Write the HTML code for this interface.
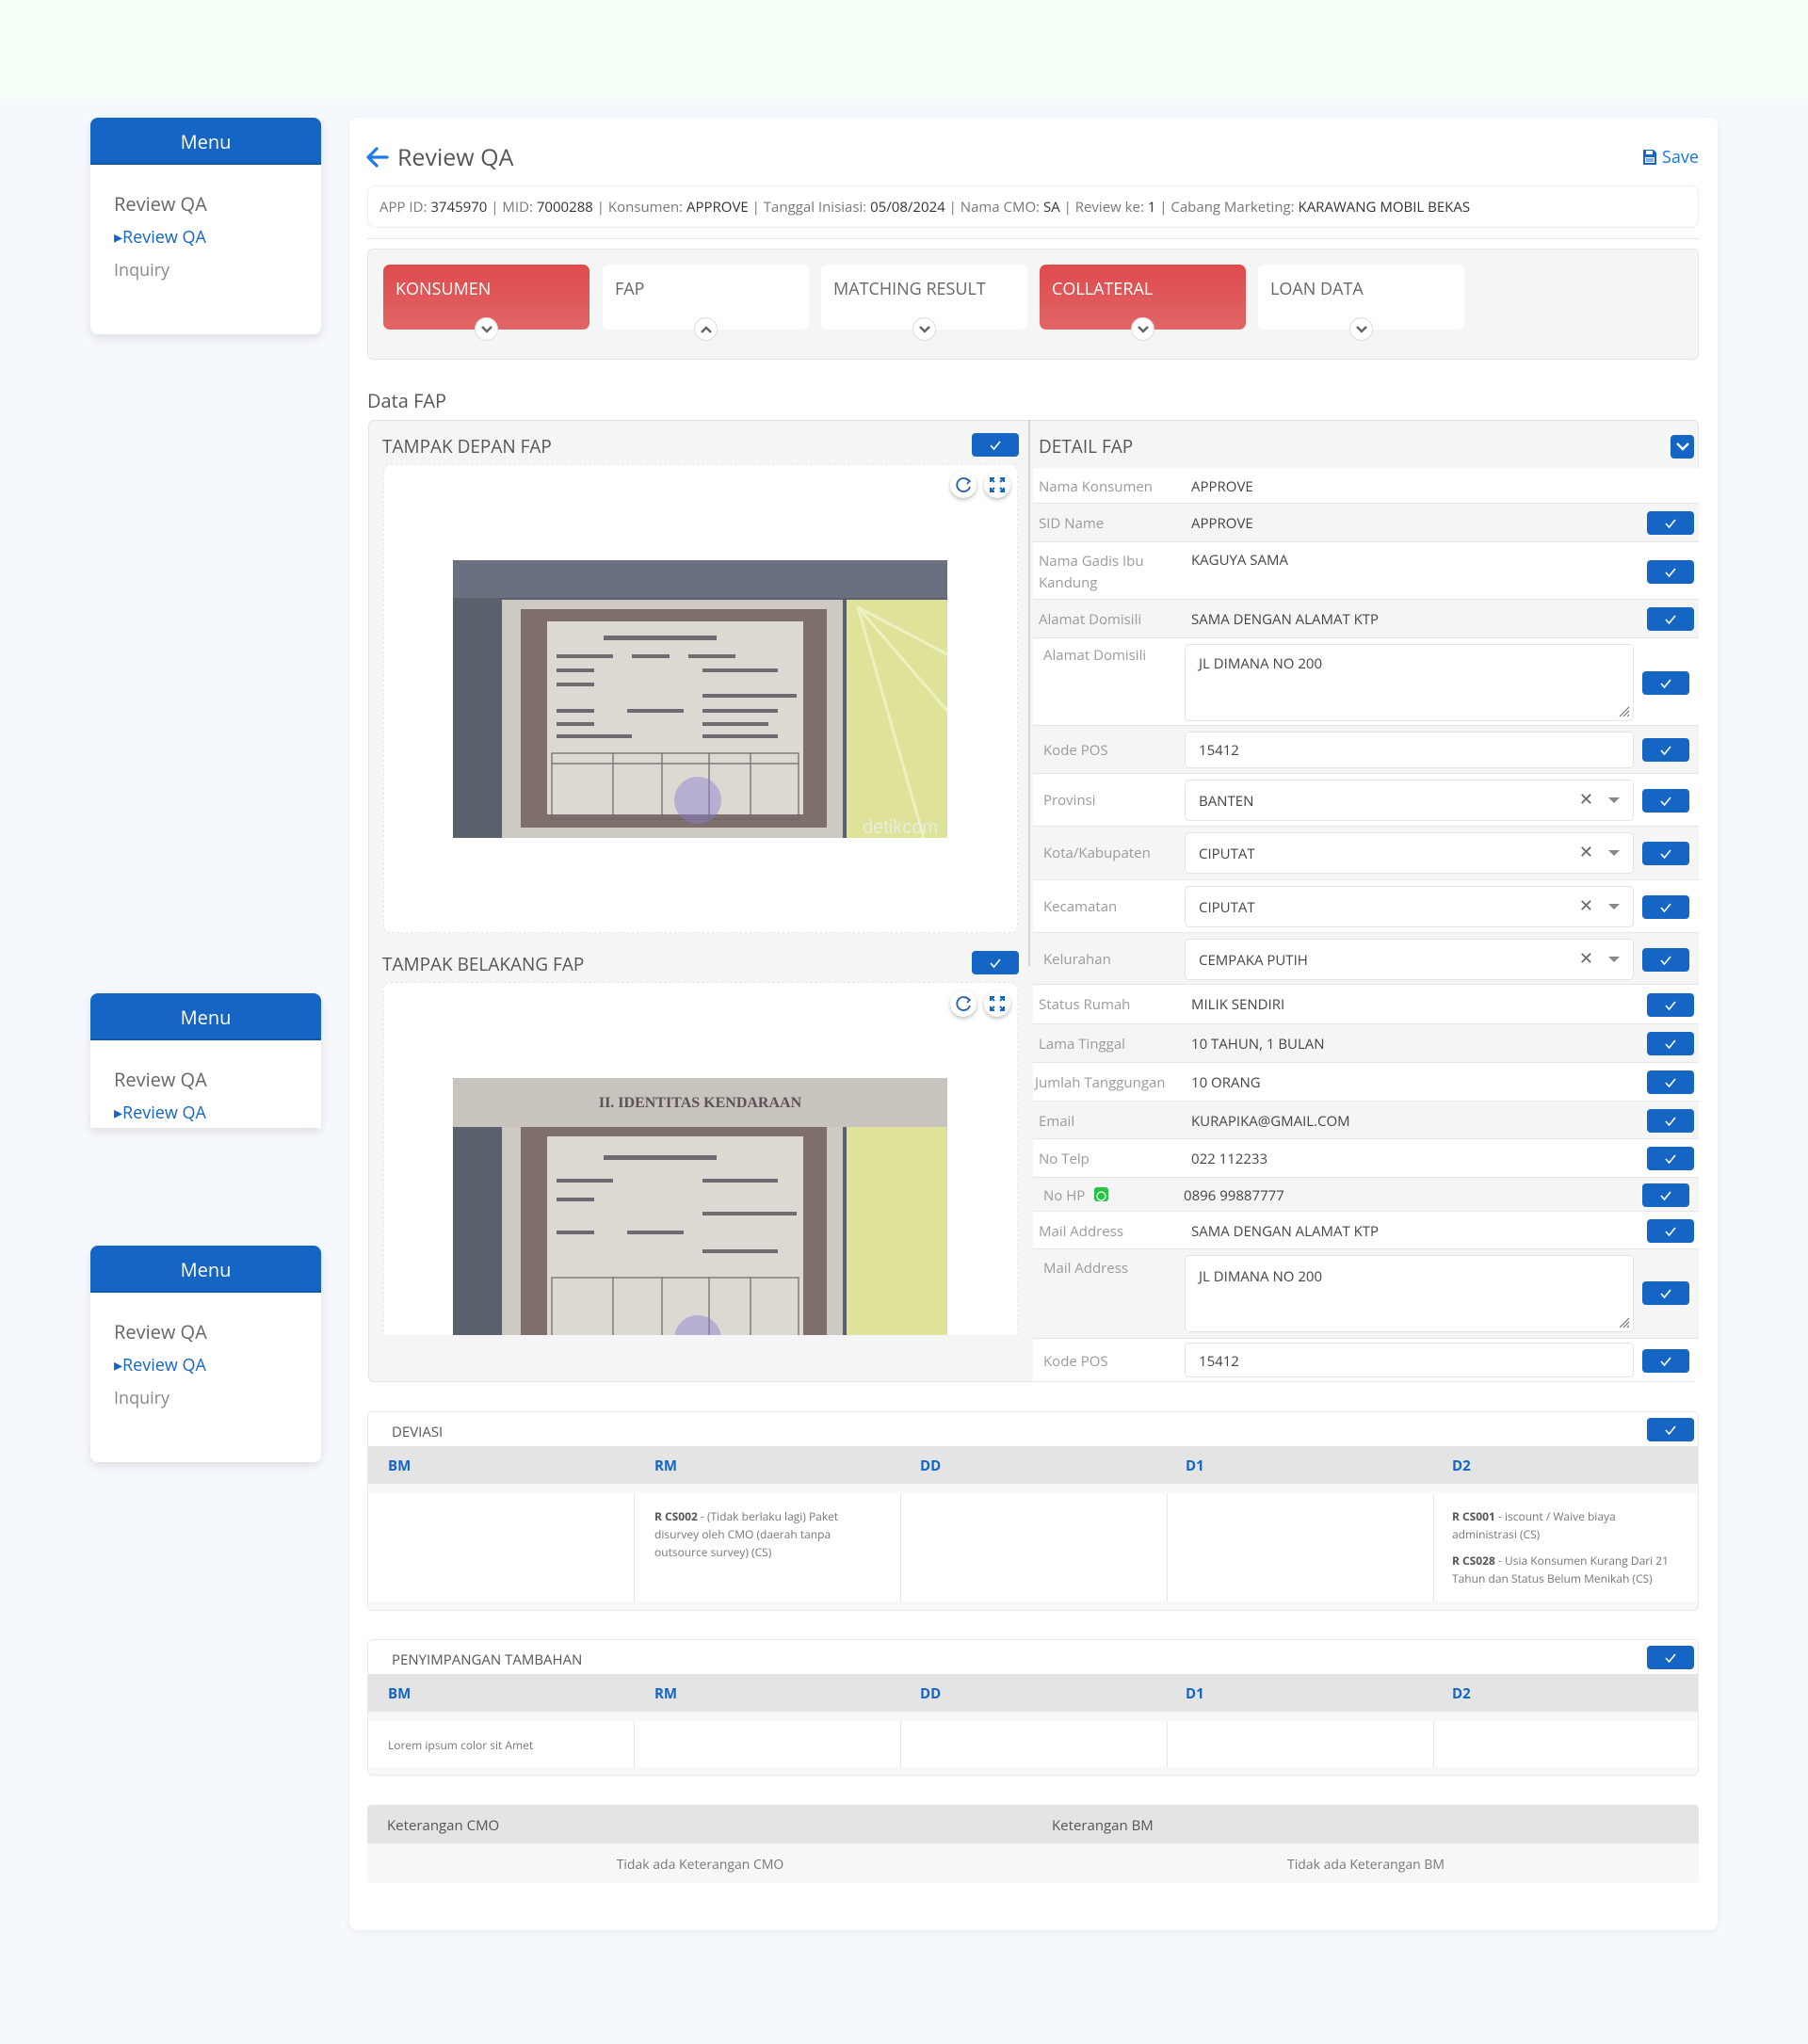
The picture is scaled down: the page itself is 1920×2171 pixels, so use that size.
<!DOCTYPE html>
<html><head><meta charset="utf-8">
<style>
*{box-sizing:border-box;margin:0;padding:0}
body{width:1920px;height:2171px;background:#f5f8fd;font-family:"Open Sans","Liberation Sans",sans-serif;position:relative;overflow:hidden;color:#555}
.a{position:absolute}
.top{left:0;top:0;width:1920px;height:105px;background:#f5fff5}
.side{left:96px;width:245px;background:#fff;border-radius:8px;box-shadow:0 4px 10px rgba(0,0,0,.10);overflow:hidden}
.side .h{height:50px;background:#1565c4;color:#fff;font-size:20px;text-align:center;line-height:52px;border-bottom:2px solid #0f58ad}
.side .i{position:absolute;left:25px;font-size:20px;color:#666}
.side .s{position:absolute;left:25px;font-size:18px;color:#1565c4}
.main{left:371px;top:125px;width:1453px;height:1925px;background:#fff;border-radius:8px;box-shadow:0 2px 8px rgba(0,0,0,.05)}
.btn{position:absolute;width:50px;height:25px;background:#1565c4;border-radius:4px;display:flex;align-items:center;justify-content:center}
.tab{position:absolute;top:281px;width:219px;height:69px;border-radius:7px;background:#fff;font-size:18px;color:#666;padding:14px 0 0 13px}
.tab.r{background:linear-gradient(#df4b4d,#e06566);color:#fff}
.chev{position:absolute;left:97px;top:56px;width:25px;height:25px;border-radius:50%;background:#fff;border:1px solid #ddd;display:flex;align-items:center;justify-content:center}
.row{position:absolute;left:1097px;width:707px;border-bottom:1px solid #e6e6e6}
.g{background:#f5f5f5}.w{background:#fff}
.lb{position:absolute;left:6px;font-size:15px;color:#9a9a9a}
.lb2{position:absolute;left:11px;font-size:15px;color:#9a9a9a}
.vl{position:absolute;left:168px;font-size:15px;color:#444}
.inp{position:absolute;left:161px;width:477px;background:#fff;border:1px solid #e3e3e3;border-radius:5px;font-size:15px;color:#444;padding-left:14px}
.x{position:absolute;right:42px;font-size:18px;color:#666}
.car{position:absolute;right:14px;width:0;height:0;border-left:6px solid transparent;border-right:6px solid transparent;border-top:6px solid #888}
.card{position:absolute;left:390px;width:1414px;background:#fff;border:1px solid #e8e8e8;border-radius:6px;overflow:hidden}
.th{position:absolute;left:0;width:100%;height:40px;background:#e4e4e4}
.th span{position:absolute;top:11px;font-size:15px;font-weight:bold;color:#1565c4}
.cell{position:absolute;font-size:12px;color:#777;line-height:19px}
.cell b{color:#555;font-weight:bold}
.vd{position:absolute;width:1px;background:#e6e6e6}
.ic{position:absolute;width:28px;height:28px;border-radius:50%;background:#fff;box-shadow:0 2px 4px rgba(0,0,0,.25);display:flex;align-items:center;justify-content:center}
</style></head><body>
<div class="a top"></div>

<div class="a side" style="top:125px;height:230px"><div class="h">Menu</div>
<div class="i" style="top:78px">Review QA</div>
<div class="s" style="top:115px">&#9656;Review QA</div>
<div class="i" style="top:150px;font-size:18px;color:#888">Inquiry</div></div>
<div class="a side" style="top:1055px;height:143px;border-radius:8px 8px 0 0"><div class="h">Menu</div>
<div class="i" style="top:78px">Review QA</div>
<div class="s" style="top:115px">&#9656;Review QA</div></div>
<div class="a side" style="top:1323px;height:230px"><div class="h">Menu</div>
<div class="i" style="top:78px">Review QA</div>
<div class="s" style="top:115px">&#9656;Review QA</div>
<div class="i" style="top:150px;font-size:18px;color:#888">Inquiry</div></div>

<div class="a main"></div>
<svg class="a" style="left:389px;top:156px" width="24" height="22" viewBox="0 0 24 22"><path d="M11 2 L2 11 L11 20 M2 11 H22" stroke="#1e7ae6" stroke-width="3.2" fill="none" stroke-linecap="round" stroke-linejoin="round"/></svg>
<div class="a" style="left:422px;top:150px;font-size:25px;color:#555">Review QA</div>
<svg class="a" style="left:1744px;top:158px" width="16" height="18" viewBox="0 0 16 18"><path d="M1 1 H12 L15 4 V17 H1 Z" fill="#1565c4"/><rect x="4" y="2" width="7" height="4" fill="#fff"/><rect x="3" y="9" width="10" height="6" fill="#fff"/><path d="M4 11 H12 M4 13 H12" stroke="#1565c4"/></svg>
<div class="a" style="left:1765px;top:155px;font-size:18px;color:#1a73e8">Save</div>
<div class="a" style="left:390px;top:197px;width:1414px;height:45px;border:1px solid #eee;border-radius:8px;font-size:15px;color:#777;padding:12px 0 0 12px;white-space:nowrap">APP ID: <span style="color:#333">3745970</span> | MID: <span style="color:#333">7000288</span> | Konsumen: <span style="color:#333">APPROVE</span> | Tanggal Inisiasi: <span style="color:#333">05/08/2024</span> | Nama CMO: <span style="color:#333">SA</span> | Review ke: <span style="color:#333">1</span> | Cabang Marketing: <span style="color:#333">KARAWANG MOBIL BEKAS</span></div>
<div class="a" style="left:390px;top:253px;width:1414px;height:1px;background:#e5e5e5"></div>
<div class="a" style="left:390px;top:264px;width:1414px;height:118px;background:#f5f5f5;border:1px solid #e6e6e6;border-radius:6px"></div>
<div class="tab r" style="left:407px">KONSUMEN<div class="chev"><svg width="12" height="8"><path d="M1 1 L6 6 L11 1" stroke="#666" stroke-width="2.5" fill="none"/></svg></div></div>
<div class="tab" style="left:640px">FAP<div class="chev"><svg width="12" height="8"><path d="M1 7 L6 2 L11 7" stroke="#666" stroke-width="2.5" fill="none"/></svg></div></div>
<div class="tab" style="left:872px">MATCHING RESULT<div class="chev"><svg width="12" height="8"><path d="M1 1 L6 6 L11 1" stroke="#666" stroke-width="2.5" fill="none"/></svg></div></div>
<div class="tab r" style="left:1104px">COLLATERAL<div class="chev"><svg width="12" height="8"><path d="M1 1 L6 6 L11 1" stroke="#666" stroke-width="2.5" fill="none"/></svg></div></div>
<div class="tab" style="left:1336px">LOAN DATA<div class="chev"><svg width="12" height="8"><path d="M1 1 L6 6 L11 1" stroke="#666" stroke-width="2.5" fill="none"/></svg></div></div>

<div class="a" style="left:390px;top:412px;font-size:20px;color:#555">Data FAP</div>

<div class="a" style="left:391px;top:446px;width:1413px;height:1022px;background:#f5f5f5;border:1px solid #e4e4e4;border-radius:6px"></div>
<div class="a" style="left:1092px;top:446px;width:2px;height:580px;background:#d5d5d5"></div>
<div class="a" style="left:406px;top:461px;font-size:19px;color:#555">TAMPAK DEPAN FAP</div>
<div class="btn" style="left:1032px;top:460px"><svg width="14" height="12"><path d="M2 6 L5.5 10 L12 2" stroke="#fff" stroke-width="1.6" fill="none"/></svg></div>
<div class="a" style="left:407px;top:493px;width:674px;height:498px;background:#fff;border:1px dashed #e6e6e6;border-radius:8px"></div>
<svg class="a" style="left:481px;top:595px" width="525" height="295" viewBox="0 0 525 295">
<rect width="525" height="295" fill="#5b606d"/><rect width="525" height="40" fill="#6b7080"/>
<rect x="52" y="42" width="362" height="253" fill="#cfc9c3"/>
<rect x="72" y="52" width="325" height="232" fill="#7e6f6c"/>
<rect x="100" y="65" width="272" height="205" fill="#ddd8d1"/>
<rect x="418" y="42" width="107" height="253" fill="#dfe39a"/>
<path d="M430 50 L525 100 M430 50 L525 160 M430 50 L500 295" stroke="#eef0c0" stroke-width="3"/>
<g stroke="#6c6868" stroke-width="1.2" fill="none"><rect x="105" y="205" width="262" height="70"/><path d="M170 205 V275 M222 205 V275 M272 205 V275 M316 205 V275 M105 216 H367"/></g>
<g fill="#6d6a70"><rect x="160" y="80" width="120" height="5"/><rect x="110" y="100" width="60" height="4"/><rect x="190" y="100" width="40" height="4"/><rect x="250" y="100" width="50" height="4"/><rect x="110" y="115" width="40" height="4"/><rect x="265" y="115" width="80" height="4"/><rect x="110" y="130" width="40" height="4"/><rect x="265" y="142" width="100" height="4"/><rect x="110" y="158" width="40" height="4"/><rect x="185" y="158" width="60" height="4"/><rect x="265" y="158" width="80" height="4"/><rect x="110" y="172" width="40" height="4"/><rect x="265" y="172" width="70" height="4"/><rect x="110" y="185" width="80" height="4"/><rect x="265" y="185" width="80" height="4"/></g>
<circle cx="260" cy="255" r="25" fill="#8a7fd0" opacity=".45"/>
<text x="435" y="290" font-family="Liberation Sans" font-size="20" fill="#eee" opacity=".8">detikcom</text>
</svg>
<div class="ic" style="left:1009px;top:501px"><svg width="20" height="20"><path d="M16 6 A7 7 0 1 0 17 12" stroke="#2a5fb0" stroke-width="1.8" fill="none"/><path d="M13 3 L17 6 L14 9" stroke="#2a5fb0" stroke-width="1.6" fill="none"/></svg></div>
<div class="ic" style="left:1045px;top:501px"><svg width="16" height="16"><path d="M1 5 V1 H5 M1 1 L5 5 M11 1 H15 V5 M15 1 L11 5 M15 11 V15 H11 M15 15 L11 11 M5 15 H1 V11 M1 15 L5 11" stroke="#1565c4" stroke-width="2" fill="none"/></svg></div>

<div class="a" style="left:406px;top:1011px;font-size:19px;color:#555">TAMPAK BELAKANG FAP</div>
<div class="btn" style="left:1032px;top:1010px"><svg width="14" height="12"><path d="M2 6 L5.5 10 L12 2" stroke="#fff" stroke-width="1.6" fill="none"/></svg></div>
<div class="a" style="left:407px;top:1043px;width:674px;height:375px;background:#fff;border:1px dashed #e6e6e6;border-bottom:none;border-radius:8px 8px 0 0;overflow:hidden"></div>
<div class="a" style="left:481px;top:1145px;width:525px;height:273px;overflow:hidden">
<div class="a" style="left:0;top:0;width:525px;height:60px;background:#c9c3bd"><div class="a" style="left:0;top:18px;width:525px;text-align:center;font-family:'Liberation Serif',serif;font-size:16px;font-weight:bold;color:#5a5256">II. IDENTITAS KENDARAAN</div></div>
<svg class="a" style="left:0;top:52px" width="525" height="295" viewBox="0 0 525 295">
<rect width="525" height="295" fill="#5b606d"/>
<rect x="52" y="0" width="362" height="295" fill="#cfc9c3"/>
<rect x="72" y="0" width="325" height="284" fill="#7e6f6c"/>
<rect x="100" y="10" width="272" height="260" fill="#ddd8d1"/>
<rect x="418" y="0" width="107" height="295" fill="#dfe39a"/>
<g fill="#6d6a70"><rect x="160" y="30" width="120" height="5"/><rect x="110" y="55" width="60" height="4"/><rect x="265" y="55" width="80" height="4"/><rect x="110" y="75" width="40" height="4"/><rect x="265" y="90" width="100" height="4"/><rect x="110" y="110" width="40" height="4"/><rect x="185" y="110" width="60" height="4"/><rect x="265" y="130" width="80" height="4"/></g>
<g stroke="#6c6868" stroke-width="1.2" fill="none"><rect x="105" y="160" width="262" height="110"/><path d="M170 160 V270 M222 160 V270 M272 160 V270 M316 160 V270"/></g>
<circle cx="260" cy="225" r="25" fill="#8a7fd0" opacity=".45"/>
</svg></div>
<div class="ic" style="left:1009px;top:1052px"><svg width="20" height="20"><path d="M16 6 A7 7 0 1 0 17 12" stroke="#2a5fb0" stroke-width="1.8" fill="none"/><path d="M13 3 L17 6 L14 9" stroke="#2a5fb0" stroke-width="1.6" fill="none"/></svg></div>
<div class="ic" style="left:1045px;top:1052px"><svg width="16" height="16"><path d="M1 5 V1 H5 M1 1 L5 5 M11 1 H15 V5 M15 1 L11 5 M15 11 V15 H11 M15 15 L11 11 M5 15 H1 V11 M1 15 L5 11" stroke="#1565c4" stroke-width="2" fill="none"/></svg></div>

<div class="a" style="left:1103px;top:461px;font-size:19px;color:#555">DETAIL FAP</div>
<div class="a" style="left:1774px;top:462px;width:25px;height:25px;background:#1565c4;border-radius:4px;display:flex;align-items:center;justify-content:center"><svg width="14" height="9"><path d="M1 1 L7 7 L13 1" stroke="#fff" stroke-width="2.4" fill="none"/></svg></div>

<div class="row w" style="top:497px;height:38px"><span class="lb" style="top:10px">Nama Konsumen</span><span class="vl" style="top:10px">APPROVE</span></div>
<div class="row g" style="top:535px;height:41px"><span class="lb" style="top:11px">SID Name</span><span class="vl" style="top:11px">APPROVE</span><div class="btn" style="left:652px;top:8px"><svg width="14" height="12"><path d="M2 6 L5.5 10 L12 2" stroke="#fff" stroke-width="1.6" fill="none"/></svg></div></div>
<div class="row w" style="top:576px;height:61px"><span class="lb" style="top:9px;line-height:23px">Nama Gadis Ibu<br>Kandung</span><span class="vl" style="top:9px">KAGUYA SAMA</span><div class="btn" style="left:652px;top:19px"><svg width="14" height="12"><path d="M2 6 L5.5 10 L12 2" stroke="#fff" stroke-width="1.6" fill="none"/></svg></div></div>
<div class="row g" style="top:637px;height:41px"><span class="lb" style="top:11px">Alamat Domisili</span><span class="vl" style="top:11px">SAMA DENGAN ALAMAT KTP</span><div class="btn" style="left:652px;top:8px"><svg width="14" height="12"><path d="M2 6 L5.5 10 L12 2" stroke="#fff" stroke-width="1.6" fill="none"/></svg></div></div>
<div class="row w" style="top:678px;height:93px"><span class="lb2" style="top:8px">Alamat Domisili</span><div class="inp" style="top:6px;height:82px;padding-top:10px">JL DIMANA NO 200<svg class="a" style="right:3px;bottom:3px" width="14" height="14"><path d="M13 3 L3 13 M13 7 L7 13 M13 11 L11 13" stroke="#666"/></svg></div><div class="btn" style="left:647px;top:35px"><svg width="14" height="12"><path d="M2 6 L5.5 10 L12 2" stroke="#fff" stroke-width="1.6" fill="none"/></svg></div></div>
<div class="row g" style="top:771px;height:51px"><span class="lb2" style="top:16px">Kode POS</span><div class="inp" style="top:6px;height:39px;padding-top:9px">15412</div><div class="btn" style="left:647px;top:13px"><svg width="14" height="12"><path d="M2 6 L5.5 10 L12 2" stroke="#fff" stroke-width="1.6" fill="none"/></svg></div></div>
<div class="row w" style="top:822px;height:56px"><span class="lb2" style="top:18px">Provinsi</span><div class="inp" style="top:6px;height:44px;padding-top:12px">BANTEN<span class="x" style="top:8px">✕</span><span class="car" style="top:18px"></span></div><div class="btn" style="left:647px;top:16px"><svg width="14" height="12"><path d="M2 6 L5.5 10 L12 2" stroke="#fff" stroke-width="1.6" fill="none"/></svg></div></div>
<div class="row g" style="top:878px;height:57px"><span class="lb2" style="top:18px">Kota/Kabupaten</span><div class="inp" style="top:6px;height:44px;padding-top:12px">CIPUTAT<span class="x" style="top:8px">✕</span><span class="car" style="top:18px"></span></div><div class="btn" style="left:647px;top:16px"><svg width="14" height="12"><path d="M2 6 L5.5 10 L12 2" stroke="#fff" stroke-width="1.6" fill="none"/></svg></div></div>
<div class="row w" style="top:935px;height:56px"><span class="lb2" style="top:18px">Kecamatan</span><div class="inp" style="top:6px;height:44px;padding-top:12px">CIPUTAT<span class="x" style="top:8px">✕</span><span class="car" style="top:18px"></span></div><div class="btn" style="left:647px;top:16px"><svg width="14" height="12"><path d="M2 6 L5.5 10 L12 2" stroke="#fff" stroke-width="1.6" fill="none"/></svg></div></div>
<div class="row g" style="top:991px;height:55px"><span class="lb2" style="top:18px">Kelurahan</span><div class="inp" style="top:6px;height:44px;padding-top:12px">CEMPAKA PUTIH<span class="x" style="top:8px">✕</span><span class="car" style="top:18px"></span></div><div class="btn" style="left:647px;top:16px"><svg width="14" height="12"><path d="M2 6 L5.5 10 L12 2" stroke="#fff" stroke-width="1.6" fill="none"/></svg></div></div>
<div class="row w" style="top:1046px;height:42px"><span class="lb" style="top:11px">Status Rumah</span><span class="vl" style="top:11px">MILIK SENDIRI</span><div class="btn" style="left:652px;top:9px"><svg width="14" height="12"><path d="M2 6 L5.5 10 L12 2" stroke="#fff" stroke-width="1.6" fill="none"/></svg></div></div>
<div class="row g" style="top:1088px;height:41px"><span class="lb" style="top:11px">Lama Tinggal</span><span class="vl" style="top:11px">10 TAHUN, 1 BULAN</span><div class="btn" style="left:652px;top:8px"><svg width="14" height="12"><path d="M2 6 L5.5 10 L12 2" stroke="#fff" stroke-width="1.6" fill="none"/></svg></div></div>
<div class="row w" style="top:1129px;height:41px"><span class="lb" style="top:11px;left:2px">Jumlah Tanggungan</span><span class="vl" style="top:11px">10 ORANG</span><div class="btn" style="left:652px;top:8px"><svg width="14" height="12"><path d="M2 6 L5.5 10 L12 2" stroke="#fff" stroke-width="1.6" fill="none"/></svg></div></div>
<div class="row g" style="top:1170px;height:40px"><span class="lb" style="top:11px">Email</span><span class="vl" style="top:11px">KURAPIKA@GMAIL.COM</span><div class="btn" style="left:652px;top:8px"><svg width="14" height="12"><path d="M2 6 L5.5 10 L12 2" stroke="#fff" stroke-width="1.6" fill="none"/></svg></div></div>
<div class="row w" style="top:1210px;height:41px"><span class="lb" style="top:11px">No Telp</span><span class="vl" style="top:11px">022 112233</span><div class="btn" style="left:652px;top:8px"><svg width="14" height="12"><path d="M2 6 L5.5 10 L12 2" stroke="#fff" stroke-width="1.6" fill="none"/></svg></div></div>
<div class="row g" style="top:1251px;height:36px"><span class="lb2" style="top:9px">No HP</span><span class="a" style="left:65px;top:10px;width:15px;height:15px;background:#25c244;border-radius:3px"><svg width="15" height="15"><circle cx="7.5" cy="7.5" r="4.5" stroke="#fff" stroke-width="1.3" fill="none"/></svg></span><span class="vl" style="top:9px;left:160px">0896 99887777</span><div class="btn" style="left:647px;top:6px"><svg width="14" height="12"><path d="M2 6 L5.5 10 L12 2" stroke="#fff" stroke-width="1.6" fill="none"/></svg></div></div>
<div class="row w" style="top:1287px;height:40px"><span class="lb" style="top:11px">Mail Address</span><span class="vl" style="top:11px">SAMA DENGAN ALAMAT KTP</span><div class="btn" style="left:652px;top:8px"><svg width="14" height="12"><path d="M2 6 L5.5 10 L12 2" stroke="#fff" stroke-width="1.6" fill="none"/></svg></div></div>
<div class="row g" style="top:1327px;height:95px"><span class="lb2" style="top:10px">Mail Address</span><div class="inp" style="top:6px;height:82px;padding-top:12px">JL DIMANA NO 200<svg class="a" style="right:3px;bottom:3px" width="14" height="14"><path d="M13 3 L3 13 M13 7 L7 13 M13 11 L11 13" stroke="#666"/></svg></div><div class="btn" style="left:647px;top:34px"><svg width="14" height="12"><path d="M2 6 L5.5 10 L12 2" stroke="#fff" stroke-width="1.6" fill="none"/></svg></div></div>
<div class="row w" style="top:1422px;height:45px;border-bottom:none"><span class="lb2" style="top:14px">Kode POS</span><div class="inp" style="top:4px;height:37px;padding-top:9px">15412</div><div class="btn" style="left:647px;top:11px"><svg width="14" height="12"><path d="M2 6 L5.5 10 L12 2" stroke="#fff" stroke-width="1.6" fill="none"/></svg></div></div>

<div class="card" style="top:1499px;height:212px">
<div class="a" style="left:25px;top:11px;font-size:15px;color:#555">DEVIASI</div>
<div class="btn" style="left:1358px;top:6px"><svg width="14" height="12"><path d="M2 6 L5.5 10 L12 2" stroke="#fff" stroke-width="1.6" fill="none"/></svg></div>
<div class="th" style="top:36px"><span style="left:21px">BM</span><span style="left:304px">RM</span><span style="left:586px">DD</span><span style="left:868px">D1</span><span style="left:1151px">D2</span></div>
<div class="a" style="left:0;top:76px;width:100%;height:10px;background:#f7f8fa"></div>
<div class="a" style="left:0;top:201px;width:100%;height:11px;background:#f7f8fa"></div>
<div class="vd" style="left:282px;top:86px;height:115px"></div><div class="vd" style="left:565px;top:86px;height:115px"></div><div class="vd" style="left:848px;top:86px;height:115px"></div><div class="vd" style="left:1131px;top:86px;height:115px"></div>
<div class="cell" style="left:304px;top:101px;width:230px"><b>R CS002</b> - (Tidak berlaku lagi) Paket disurvey oleh CMO (daerah tanpa outsource survey) (CS)</div>
<div class="cell" style="left:1151px;top:101px;width:235px"><b>R CS001</b> - iscount / Waive biaya administrasi (CS)<div style="height:9px"></div><b>R CS028</b> - Usia Konsumen Kurang Dari 21 Tahun dan Status Belum Menikah (CS)</div>
</div>

<div class="card" style="top:1741px;height:145px">
<div class="a" style="left:25px;top:11px;font-size:15px;color:#555">PENYIMPANGAN TAMBAHAN</div>
<div class="btn" style="left:1358px;top:6px"><svg width="14" height="12"><path d="M2 6 L5.5 10 L12 2" stroke="#fff" stroke-width="1.6" fill="none"/></svg></div>
<div class="th" style="top:36px"><span style="left:21px">BM</span><span style="left:304px">RM</span><span style="left:586px">DD</span><span style="left:868px">D1</span><span style="left:1151px">D2</span></div>
<div class="a" style="left:0;top:76px;width:100%;height:10px;background:#f7f8fa"></div>
<div class="a" style="left:0;top:135px;width:100%;height:10px;background:#f7f8fa"></div>
<div class="vd" style="left:282px;top:86px;height:49px"></div><div class="vd" style="left:565px;top:86px;height:49px"></div><div class="vd" style="left:848px;top:86px;height:49px"></div><div class="vd" style="left:1131px;top:86px;height:49px"></div>
<div class="cell" style="left:21px;top:102px">Lorem ipsum color sit Amet</div>
</div>

<div class="a" style="left:390px;top:1917px;width:1414px;height:83px;border-radius:4px;overflow:hidden">
<div class="a" style="left:0;top:0;width:100%;height:41px;background:#e4e4e4"></div>
<div class="a" style="left:0;top:41px;width:100%;height:42px;background:#f6f7f9"></div>
<div class="a" style="left:21px;top:12px;font-size:15px;color:#555">Keterangan CMO</div>
<div class="a" style="left:727px;top:12px;font-size:15px;color:#555">Keterangan BM</div>
<div class="a" style="left:0;top:54px;width:707px;text-align:center;font-size:14px;color:#777">Tidak ada Keterangan CMO</div>
<div class="a" style="left:707px;top:54px;width:707px;text-align:center;font-size:14px;color:#777">Tidak ada Keterangan BM</div>
</div>
</body></html>
